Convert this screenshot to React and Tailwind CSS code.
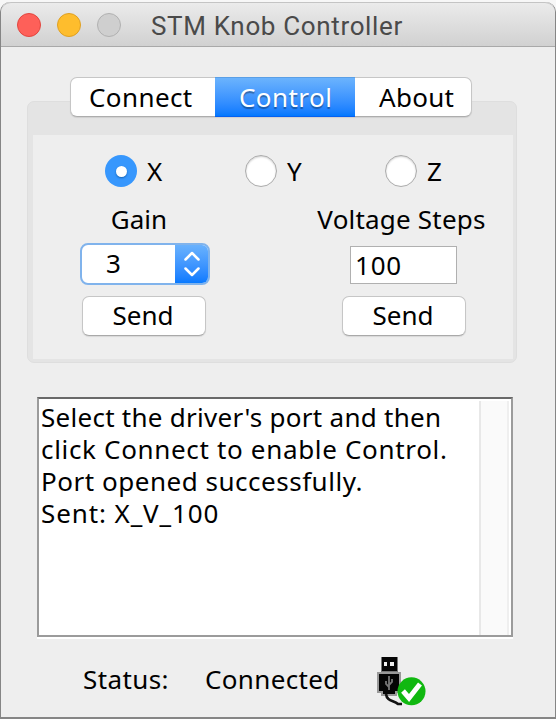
const label = "font-['Noto_Sans','Open_Sans',sans-serif] text-[26px] leading-8 whitespace-nowrap";

function TitleBar() {
  return (
    <header className="flex h-[45px] shrink-0 items-center rounded-t-[10px] border-t border-b border-t-[#c4c4c4] border-b-[#a9a9a9] bg-gradient-to-b from-[#ebebeb] to-[#d1d1d1] pl-4">
      <div className="flex gap-4">
        <span className="size-6 rounded-full border border-[#e2463f] bg-[#fe6059]" />
        <span className="size-6 rounded-full border border-[#dfa023] bg-[#febd2d]" />
        <span className="size-6 rounded-full border border-[#b1b1b1] bg-[#cfcfcf]" />
      </div>
      <h1 className="ml-[30px] pt-[3px] font-['Roboto',sans-serif] text-[26px] leading-8 tracking-[0.65px] whitespace-nowrap text-[#4a4a4a]">
        STM Knob Controller
      </h1>
    </header>
  );
}

function Tabs() {
  return (
    <div className="relative ml-[69px] flex h-10 w-[402px] rounded-[7px] border border-[#c6c6c6] border-b-[#adadad] bg-white shadow-[0_1px_1px_#00000018]">
      <button className={`w-[144px] pb-px pl-[18px] text-left tracking-[0.4px] ${label}`}>Connect</button>
      <button className={`-my-px w-[140px] border-t border-b border-t-[#5a9fe6] border-b-[#0660f0] bg-gradient-to-b from-[#6bb3fd] to-[#0078ff] pb-px pl-6 text-left tracking-[0.43px] text-white [text-shadow:0_2px_1px_#00000055] ${label}`}>
        Control
      </button>
      <button className={`flex-1 pb-px pl-6 text-left tracking-[0.3px] ${label}`}>About</button>
    </div>
  );
}

function Radio({ text, checked }) {
  return (
    <div className="flex w-[140px] shrink-0 items-center gap-[10px]">
      {checked ? (
        <span className="flex size-8 items-center justify-center rounded-full bg-[#3797fd]">
          <span className="size-[11px] rounded-full bg-white shadow-[0_1px_2px_#1462b5]" />
        </span>
      ) : (
        <span className="size-8 rounded-full border border-[#ababab] bg-white shadow-[inset_0_1px_2px_#00000030]" />
      )}
      <span className={label}>{text}</span>
    </div>
  );
}

function SendButton() {
  return (
    <button className={`h-10 w-[124px] rounded-[7px] border border-[#c6c6c6] border-b-[#a9a9a9] bg-white pr-[2px] pb-[3px] shadow-[0_1px_1px_#00000018] ${label}`}>
      Send
    </button>
  );
}

function GainSelect() {
  return (
    <div className="flex h-[42px] w-[130px] overflow-hidden rounded-[8px] border-2 border-[#80b3ec] bg-white">
      <span className={`flex-1 pt-[2px] pl-6 ${label}`}>3</span>
      <span className="-my-px -mr-px flex w-[34px] items-center justify-center bg-gradient-to-b from-[#6bb3fd] to-[#0078ff]">
        <svg className="h-[26px] w-4" viewBox="0 0 16 26" fill="none" stroke="white" strokeWidth="2.5" strokeLinecap="round" strokeLinejoin="round">
          <path d="M1.5 8.5 8 2l6.500 6.500M1.500 17.500l6.500 6.500 6.500-6.500" />
        </svg>
      </span>
    </div>
  );
}

function UsbIcon() {
  return (
    <svg className="h-[52px] w-[50px]" viewBox="0 0 50 52">
      <path d="M5 1h17v16H5z" fill="#777777" />
      <path d="M6 1h15v14H6z" fill="#050505" />
      <path d="M8 6h3v4H8zM14 6h4v4h-4z" fill="#eeeeee" />
      <path d="M1 16h24v21h-4v3H5v-3H1z" fill="#999999" />
      <path d="M3 18h20v17h-4v3H7v-3H3z" fill="#050505" />
      <path d="M13 20v14M10 25v3l3 3M16 23v3l-3 3" fill="none" stroke="#777777" strokeWidth="1.8" />
      <path d="M10 38c1 8 8 6 12 10h4" fill="none" stroke="#111111" strokeWidth="2.6" />
      <circle cx="35.5" cy="35.3" r="14" fill="#10b810" />
      <path d="m27 35 6 7 11-14" fill="none" stroke="white" strokeWidth="5" />
    </svg>
  );
}

function ControlPanel() {
  return (
    <section className="-mt-4 ml-[26px] h-[262px] w-[490px] rounded-[7px] border border-[#dedede] bg-[#e4e4e4] pt-[33px] pr-[3px] pl-[5px]">
      <div className="h-[224px] bg-[#eeeeee] pt-5">
        <div className="flex pl-[72px]">
          <Radio text="X" checked />
          <Radio text="Y" />
          <Radio text="Z" />
        </div>
        <div className="mt-4 flex">
          <div className="flex w-[212px] flex-col items-center">
            <span className={label}>Gain</span>
            <div className="mt-2 ml-[12px]"><GainSelect /></div>
            <div className="mt-[11px] ml-[10px]"><SendButton /></div>
          </div>
          <div className="ml-[52px] flex w-[212px] flex-col items-center">
            <span className={`-ml-[3px] tracking-[0.2px] ${label}`}>Voltage Steps</span>
            <div className={`mt-[11px] ml-px h-[38px] w-[107px] border border-[#b0b0b0] bg-white pt-[2px] pl-1 tracking-[0.8px] ${label}`}>100</div>
            <div className="mt-[12px] ml-[2px]"><SendButton /></div>
          </div>
        </div>
      </div>
    </section>
  );
}

function Log() {
  return (
    <section className="mt-[34px] ml-9 h-[242px] w-[476px] border-b-2 border-white">
      <div className="flex h-[240px] border-2 border-[#9b9b9b] border-t-[#696969] bg-white">
        <div className={`flex-1 pt-[2px] pl-[2px] ${label}`}>
          <p className="tracking-[0.27px]">Select the driver's port and then</p>
          <p className="tracking-[0.67px]">click Connect to enable Control.</p>
          <p className="tracking-[0.52px]">Port opened successfully.</p>
          <p className="tracking-[0.9px]">Sent: X_V_100</p>
        </div>
        <div className="mt-[2px] mr-[2px] w-[30px] border-x-2 border-[#e8e8e8] border-r-[#efefef] bg-[#fafafa]" />
      </div>
    </section>
  );
}

export default function App() {
  return (
    <div className="h-[719px] w-[556px] overflow-hidden bg-[#f7f7f7] pt-[2px]">
      <div className="flex h-[717px] flex-col rounded-t-[10px] border-r border-b-2 border-l border-[#858585] bg-[#eeeeee] text-black">
        <TitleBar />
        <main className="pt-[30px]">
          <Tabs />
          <ControlPanel />
          <Log />
          <footer className="mt-[17px] flex">
            <span className={`mt-[7px] ml-[82px] w-[122px] tracking-[0.4px] ${label}`}>Status:</span>
            <span className={`mt-[7px] w-[171px] tracking-[0.35px] ${label}`}>Connected</span>
            <UsbIcon />
          </footer>
        </main>
      </div>
    </div>
  );
}
